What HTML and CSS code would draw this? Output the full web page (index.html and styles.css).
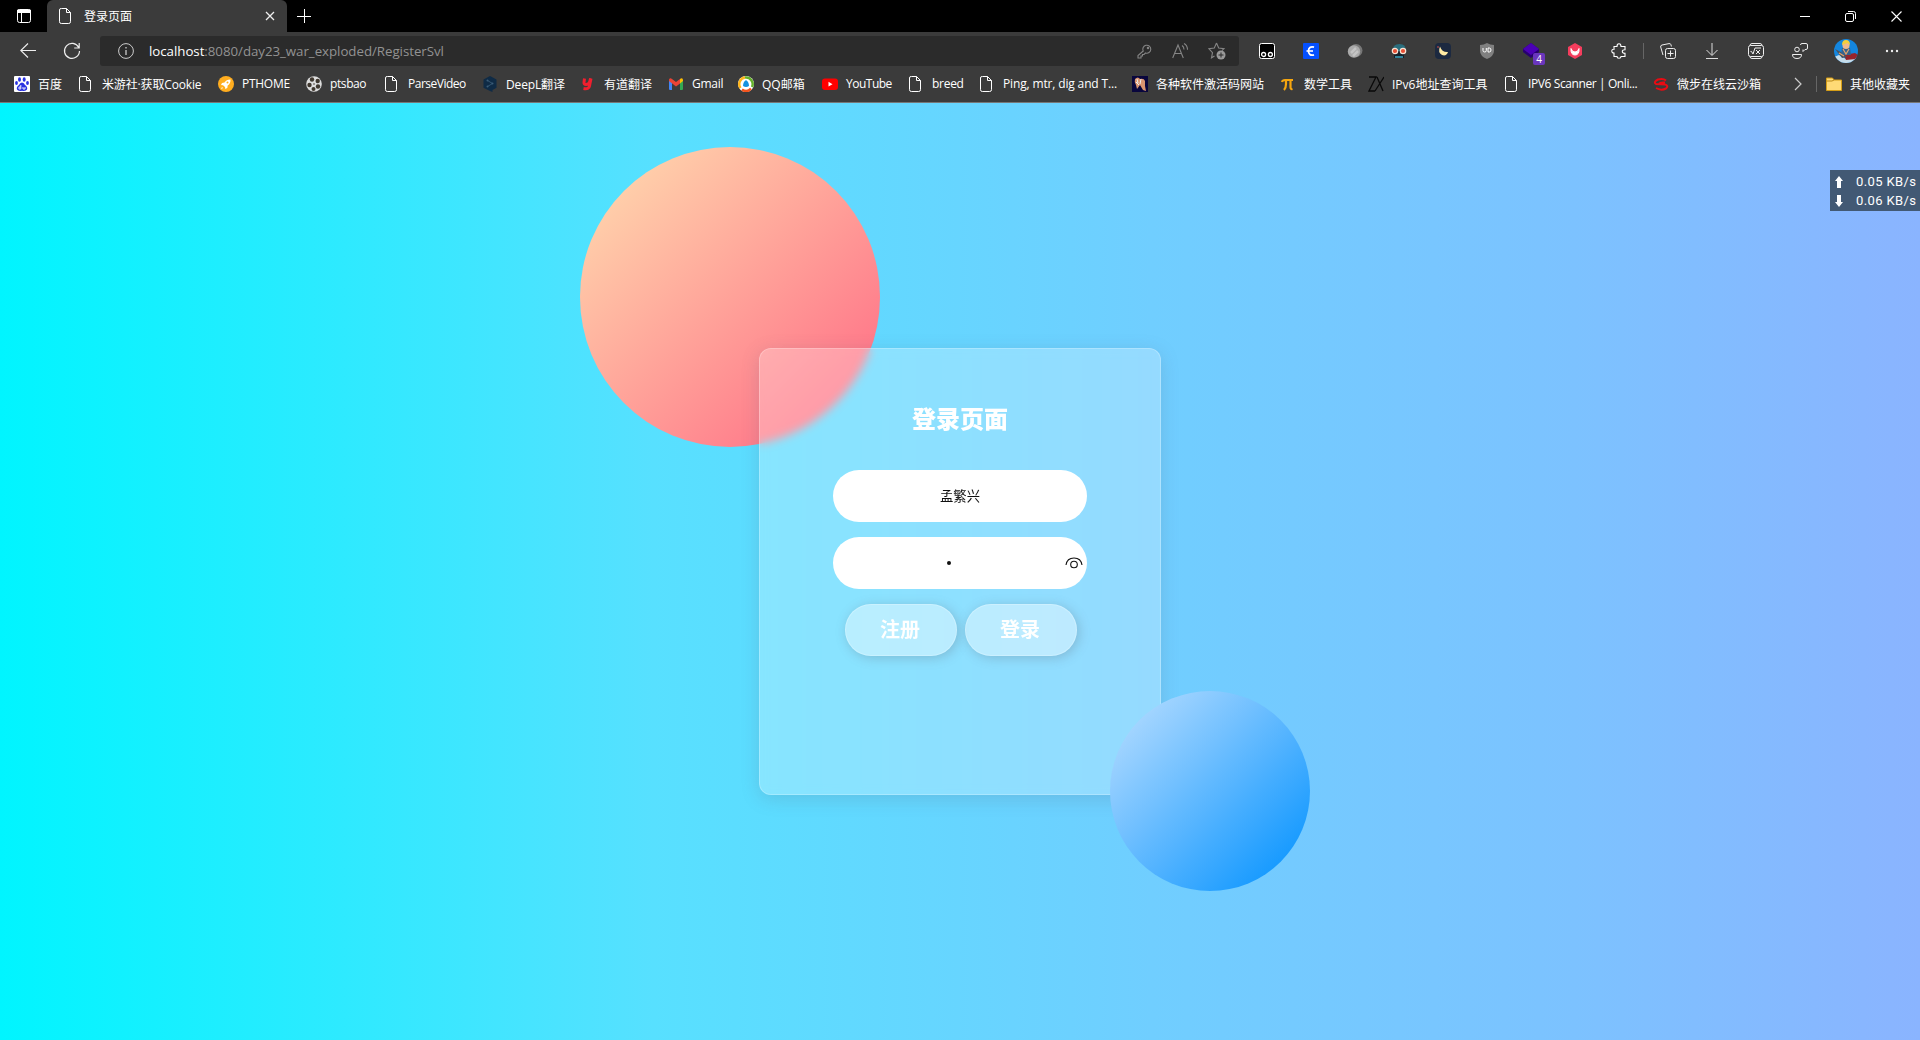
FILE: index.html
```html
<!DOCTYPE html>
<html lang="zh-CN">
<head>
<meta charset="utf-8">
<title>登录页面</title>
<link rel="stylesheet" href="styles.css">
</head>
<body>
<svg class="defs" width="0" height="0">
  <symbol id="file" viewBox="0 0 16 16"><path d="M3.500.5h5l4 4v9.200q0 1.800-1.800 1.800H3.300Q1.500 15.500 1.500 13.700V2Q1.500.5 3 .5zM8.500.5v4h4" fill="none" stroke="#fff"/></symbol>
</svg>

<header class="browser">
  <div class="tabs">
    <svg class="workspace" width="16" height="16" viewBox="0 0 16 16"><rect x="1.500" y="1.500" width="13" height="13" rx="2" fill="none" stroke="#fff"/><path d="M1.500 2h13v2.500h-13z" fill="#fff" stroke="#fff"/><path d="M5.500 4v10.500" stroke="#fff"/></svg>
    <div class="tab">
      <svg class="i16"><use href="#file"/></svg>
      <span>登录页面</span>
      <svg width="10" height="10" viewBox="0 0 10 10"><path d="M1 1l8 8M9 1L1 9" stroke="#eee" stroke-width="1.300"/></svg>
    </div>
    <svg class="plus" width="14" height="14" viewBox="0 0 14 14"><path d="M7.500 0v14M0 7.500h14" stroke="#fff"/></svg>
    <div class="window">
      <svg width="10" height="10" viewBox="0 0 10 10"><path d="M0 5.500h10" stroke="#fff"/></svg>
      <svg width="11" height="11" viewBox="0 0 11 11"><rect x=".5" y="2.500" width="8" height="8" rx="1.500" fill="none" stroke="#fff"/><path d="M3 .5h5.500q2 0 2 2V8" fill="none" stroke="#fff"/></svg>
      <svg width="11" height="11" viewBox="0 0 11 11"><path d="M.5.5l10 10M10.500.5l-10 10" stroke="#fff" stroke-width="1.100"/></svg>
    </div>
  </div>

  <div class="toolbar">
    <svg class="back" width="16" height="16" viewBox="0 0 16 16"><path d="M16 7.500H1M8 .5L.8 7.500 8 14.500" fill="none" stroke="#eee" stroke-width="1.100"/></svg>
    <svg class="reload" width="18" height="18" viewBox="0 0 18 18"><path d="M15.700 5.500A7.500 7.500 0 1 0 16.500 9M16.200 1v5h-5" fill="none" stroke="#eee" stroke-width="1.200"/></svg>
    <div class="address">
      <svg width="16" height="16" viewBox="0 0 16 16"><circle cx="8" cy="8" r="7.400" fill="none" stroke="#ccc"/><path d="M8 7v5M8 4v1.500" stroke="#ccc" stroke-width="1.300"/></svg>
      <p class="url"><b>localhost</b>:8080/day23_war_exploded/RegisterSvl</p>
      <div class="address-tools">
        <svg width="15" height="15" viewBox="0 0 15 15" fill="none" stroke="#858585" stroke-width="1.100"><path d="M6.200 7A4 4 0 1 1 8.500 9L7 10.500H5.500V12H4v2H1v-2.500z"/><circle cx="11" cy="4" r=".7"/></svg>
        <svg width="16" height="16" viewBox="0 0 16 16" fill="none" stroke="#858585" stroke-width="1.100"><path d="M.7 15L6 2l5.300 13M2.500 10.500h7M10 2.500q2 1.200 2 4M12 .5q3.500 2 3.500 6.200"/></svg>
        <svg width="18" height="18" viewBox="0 0 18 18"><path d="M8.500 1l2.200 5 5.300.6-2 2M6.500 14l-3 1.800L4.500 10.700.8 6.600 6.300 6 8.500 1" fill="none" stroke="#858585" stroke-width="1.100"/><circle cx="13" cy="13" r="4.500" fill="#9a9a9a"/><path d="M13 10.500v5M10.500 13h5" stroke="#2b2b2b"/></svg>
      </div>
    </div>
    <div class="extensions">
      <svg class="i16" viewBox="0 0 16 16"><rect x=".5" y=".5" width="15" height="15" rx="2" fill="#000" stroke="#fff"/><g fill="none" stroke="#fff" stroke-width="1.300"><circle cx="4.600" cy="11.500" r="2"/><circle cx="11.400" cy="11.500" r="2"/></g></svg>
      <svg class="i16" viewBox="0 0 16 16"><rect width="16" height="16" rx="1" fill="#0450ff"/><path d="M11 4.200C7.500 3 5.500 5 5.500 8s2 5 5.500 3.800" fill="none" stroke="#fff" stroke-width="1.800"/><path d="M3.500 8H10" stroke="#fff" stroke-width="1.600"/></svg>
      <svg class="i16" viewBox="0 0 16 16"><circle cx="9" cy="7.500" r="6.500" fill="#777"/><circle cx="7" cy="8.500" r="6.200" fill="#aaa"/><path d="M4 10l5-5M6 13l5-5" stroke="#c4c4c4" stroke-width="2.500"/></svg>
      <svg class="i16" viewBox="0 0 16 16"><path d="M1.500 8Q1.500 1 8.500 1t6 7z" fill="#2b6e7d"/><path d="M3 8h10v7H3z" fill="#15202a"/><path d="M4 13h8v2H4z" fill="#31839a"/><g fill="#e95035" stroke="#f6e4d5" stroke-width="1.200"><circle cx="4" cy="8" r="2.700"/><circle cx="12" cy="8" r="2.700"/></g></svg>
      <svg class="i16" viewBox="0 0 16 16"><rect width="16" height="16" rx="4" fill="#1c2940"/><path d="M5 3.500q2 6 8 5.500-1.500 4.500-6 3Q2.500 9.500 5 3.500" fill="#ffeaa3"/><circle cx="3" cy="4" r=".8" fill="#e5534b"/></svg>
      <svg class="i16" viewBox="0 0 16 16"><path d="M1 2q4 0 7-2 3 2 7 2v6q0 5-7 8-7-3-7-8z" fill="#808080"/><path d="M4 5v2.500q0 1.500 1.700 1.500T7.300 7.500V5M9 5v4h1.300Q12 9 12 7t-1.700-2z" fill="none" stroke="#fff"/></svg>
      <div class="blocks"><svg class="i16" viewBox="0 0 16 16"><path d="M0 6l8-6 8 6v3l-8 6-8-6z" fill="#27006f"/><path d="M0 6l8-6 8 6-8 6z" fill="#4b00b5"/></svg><i>4</i></div>
      <svg class="i16" viewBox="0 0 16 16"><path d="M8 0l7 4v8l-7 4-7-4V4z" fill="#f43d5d"/><path d="M4 5.500Q3.500 12 8 12t4-6.500Q11 9 8 9T4 5.500" fill="#fff" stroke="#fff"/></svg>
      <svg class="i16" viewBox="0 0 16 16"><path d="M3 3.500h3Q6 .7 8 .7t2 2.800h4v3.300q-2.700 0-2.700 1.800t2.700 1.800v3.100h-4Q10 15.300 8 15.300t-2-1.800H3V10Q.8 10 .8 8T3 6.300z" fill="none" stroke="#fff" stroke-width="1.100"/></svg>
    </div>
    <div class="actions">
      <svg class="i16" viewBox="0 0 16 16" fill="none" stroke="#eee"><rect x="5.500" y="5.500" width="10" height="10" rx="2"/><path d="M10.500 7.500v6M7.500 10.500h6M3 12L.7 4Q.3 2.500 2 2L9 .6q1.600-.3 2 1.200l.4 1.700"/></svg>
      <svg class="i16" viewBox="0 0 16 16" fill="none" stroke="#ddd"><path d="M8 0v12M2.500 7L8 12.500 13.500 7M2 15.500h12"/></svg>
      <svg class="i16" viewBox="0 0 16 16" fill="none" stroke="#eee"><path d="M2 2.500Q2 .5 4 .5h8q2 0 2 2M2 13.500q0 2 2 2h8q2 0 2-2"/><rect x=".5" y="2.500" width="15" height="11" rx="2"/><path d="M2.500 8.500h1L5 11l2-6h6M8 7l4 4M12 7l-4 4"/></svg>
      <svg class="i16" viewBox="0 0 16 16" fill="none" stroke="#eee"><circle cx="5" cy="6.500" r="2.300"/><path d="M.5 11.500h9q0 4-4.500 4t-4.500-4zM8.500 2q0-1.500 1.500-1.500h4q1.500 0 1.500 1.500v3q0 1.500-1.500 1.500h-1l-2 2v-2"/></svg>
    </div>
    <svg class="avatar" width="24" height="24" viewBox="0 0 24 24"><defs><clipPath id="round"><circle cx="12" cy="12" r="12"/></clipPath></defs><g clip-path="url(#round)"><path d="M0 0h24v24H0z" fill="#1386df"/><path d="M0 18l5-2 7 4 12-2v7H0z" fill="#c5dcea"/><path d="M10 16l11-2 3 2-2 4-10 1z" fill="#97242b"/><path d="M1 10l6 3 6 5-5 1z" fill="#495563"/><path d="M8 9h8l1 7H7z" fill="#35628d"/><path d="M9 10l3 5 3-5M5 14l5 3" stroke="#e3a36c" stroke-width="1.200" fill="none"/><circle cx="12" cy="6.500" r="3.500" fill="#efb98b"/><path d="M8 6q0-5 4-5t4 5l-2.500-2z" fill="#f2cf3c"/></g></svg>
    <svg class="more" width="14" height="4" viewBox="0 0 14 4" fill="#eee"><circle cx="2" cy="2" r="1.200"/><circle cx="7" cy="2" r="1.200"/><circle cx="12" cy="2" r="1.200"/></svg>
  </div>

  <nav class="bookmarks">
    <a style="width:64px"><svg class="i16" viewBox="0 0 16 16"><rect width="16" height="16" rx="1" fill="#fff"/><g fill="#2932e1"><ellipse cx="5.500" cy="3.500" rx="1.500" ry="2.200"/><ellipse cx="10.200" cy="3.500" rx="1.500" ry="2.200"/><ellipse cx="2.500" cy="7" rx="1.400" ry="2"/><ellipse cx="13.500" cy="7" rx="1.400" ry="2"/><path d="M8 6.500q2 0 3 2.500 3 2 2 4.500-1 2-5 1.300-4 .7-5-1.300-1-2.500 2-4.500 1-2.500 3-2.500"/></g><path d="M6.800 9v4H5v-2h1.800M9 11v2h2v-2" stroke="#fff" fill="none" stroke-width=".9"/></svg><span>百度</span></a>
    <a class="snug" style="width:140px"><svg class="i16"><use href="#file"/></svg><span>米游社·获取Cookie</span></a>
    <a style="width:88px"><svg class="i16" viewBox="0 0 16 16"><circle cx="8" cy="8" r="8" fill="#ffad1f"/><path d="M12.500 3.500q-4-.2-6 3l-2.500.5L3 9l2 .3L7 11l.3 2 2-1 .4-2.500q3-2 2.800-6M4 11l-1 2.200L5 12" fill="#fff"/><circle cx="9.500" cy="6.500" r="1" fill="#ffad1f"/></svg><span class="tight">PTHOME</span></a>
    <a style="width:78px"><svg class="i16" viewBox="0 0 16 16"><circle cx="8" cy="8" r="7.800" fill="#ddd"/><g fill="#40382f"><circle cx="6" cy="3.500" r="2.200"/><circle cx="11.700" cy="5" r="2.200"/><circle cx="3.500" cy="9" r="2.200"/><circle cx="7.500" cy="13" r="2"/><circle cx="12" cy="10.500" r="2.200"/><circle cx="8" cy="8" r=".8"/></g></svg><span class="tighter">ptsbao</span></a>
    <a style="width:98px"><svg class="i16"><use href="#file"/></svg><span class="tightest">ParseVideo</span></a>
    <a style="width:98px"><svg class="i16" viewBox="0 0 16 16"><path d="M8 0l6.500 3.500v8.300L10.500 14v2L8 15 1.500 11.800V3.500z" fill="#0f2b46"/><path d="M5.500 4.500l5 3-5 3" stroke="#345570" fill="none"/><g fill="#3b5d78"><circle cx="5.500" cy="4.500" r="1"/><circle cx="10.500" cy="7.500" r="1"/><circle cx="5.500" cy="10.500" r="1"/></g></svg><span class="snug">DeepL翻译</span></a>
    <a style="width:88px"><svg class="i16" viewBox="0 0 16 16"><path d="M4.500 2.500L4 6.500q-.2 2 2 2 3 0 3.700-2.500L10.500 2.500M11 2.500L9.500 10q-.5 3.500-6 2.500" fill="none" stroke="#f01f2e" stroke-width="3"/></svg><span>有道翻译</span></a>
    <a style="width:70px"><svg class="i16" viewBox="0 0 16 16"><path d="M1 4h3v10H2q-1 0-1-1z" fill="#4285f4"/><path d="M12 4h3v9q0 1-1 1h-2z" fill="#34a853"/><path d="M1 3.500Q2 1.500 4 3l4 3 4-3v4.500L8 10.500 1 5z" fill="#ea4335"/><path d="M12 3q2-1.500 3 .5V5l-3 2.500z" fill="#fbbc04"/></svg><span class="tight">Gmail</span></a>
    <a style="width:84px"><svg class="i16" viewBox="0 0 16 16"><circle cx="8" cy="8" r="8" fill="#fff"/><g fill="none" stroke-width="2.500"><path d="M2.500 12A6.700 6.700 0 0 1 7 1.500" stroke="#ffb51b"/><path d="M7 1.500A6.700 6.700 0 0 1 14 11" stroke="#65b12b"/><path d="M13 12.500q-4 4.500-9 1" stroke="#f3541d"/></g><path d="M8 4q3 2 3 6-3 2-6 0 0-4 3-6" fill="#1692df"/></svg><span>QQ邮箱</span></a>
    <a style="width:86px"><svg class="i16" viewBox="0 0 16 16"><rect y="2.500" width="16" height="11.500" rx="3" fill="#f00"/><path d="M6.500 5.800l4 2.400-4 2.400z" fill="#fff"/></svg><span class="tightest">YouTube</span></a>
    <a style="width:71px"><svg class="i16"><use href="#file"/></svg><span class="tight">breed</span></a>
    <a style="width:153px"><svg class="i16"><use href="#file"/></svg><span class="snug">Ping, mtr, dig and T...</span></a>
    <a style="width:148px"><svg class="i16" viewBox="0 0 16 16"><path d="M0 0h16v16H0z" fill="#09063d"/><path d="M3 3q3-3 5 0 4-1 5 2v5l1 5-3-1-3-5-3 4-1-4Q2 6 3 3" fill="#d9946f"/><path d="M5 3l1 4M9 3l-1 5M4 6l3 3" stroke="#eee"/></svg><span>各种软件激活码网站</span></a>
    <a style="width:88px"><svg class="i16" viewBox="0 0 16 16"><path d="M2 6q.5-2 3-2h8M6 4v4q0 4-2 6M10.500 4v7q0 2.500 2 2" stroke="#f5a610" stroke-width="2.200" fill="none"/></svg><span>数学工具</span></a>
    <a style="width:136px"><svg class="i16" viewBox="0 0 16 16"><path d="M1 1h7L1 15h6M9 1l6 14M16 1L7 15" fill="none" stroke="#090909" stroke-width="1.300"/></svg><span>IPv6地址查询工具</span></a>
    <a style="width:149px"><svg class="i16"><use href="#file"/></svg><span class="tighter">IPV6 Scanner | Onli...</span></a>
    <a class="last"><svg class="i16" viewBox="0 0 16 16"><path d="M13 4.500Q10 2 5 3.500 0 6 3 8l9 .5q4 1 1 4-5 2.500-10-.5M6 8q1-2 6-1.500" fill="none" stroke="#e90b13" stroke-width="2"/></svg><span>微步在线云沙箱</span></a>
    <svg class="chevron" width="8" height="14" viewBox="0 0 8 14"><path d="M1 1l6 6-6 6" fill="none" stroke="#ccc" stroke-width="1.200"/></svg>
    <a class="other"><svg class="i16" viewBox="0 0 16 16"><path d="M.5 2h6l1.500 2h7.500v10.500H.5z" fill="#ffda76" stroke="#d59d17"/><path d="M.5 5H6l2-1" stroke="#b98614" fill="none"/></svg><span>其他收藏夹</span></a>
  </nav>
</header>

<main class="page">
  <div class="circle coral"></div>
  <form class="card">
    <h1>登录页面</h1>
    <div class="field">孟繁兴</div>
    <div class="field password"><i class="dot"></i><svg width="18" height="12" viewBox="0 0 18 12" fill="none" stroke="#111" stroke-width="1.100"><path d="M1 8Q2 1 9 1t8 7"/><circle cx="9" cy="7.500" r="3.300"/></svg></div>
    <div class="buttons"><button type="button">注册</button><button type="button">登录</button></div>
  </form>
  <div class="circle blue"></div>
  <aside class="network">
    <p><svg width="8" height="12" viewBox="0 0 8 12"><path d="M4 0l4 5H6v7H2V5H0z" fill="#fff"/></svg><span>0.05 KB/s</span></p>
    <p><svg width="8" height="12" viewBox="0 0 8 12"><path d="M4 12l4-5H6V0H2v7H0z" fill="#fff"/></svg><span>0.06 KB/s</span></p>
  </aside>
</main>
</body>
</html>
```
FILE: styles.css
```css
* { box-sizing: border-box; }
body { margin: 0; height: 1040px; overflow: hidden; display: flex; flex-direction: column; font: 12px "Open Sans", "Noto Sans CJK SC", sans-serif; color: #fff; }
h1, p { margin: 0; }
i { font-style: normal; }
svg { display: block; flex: none; }
.defs { position: absolute; }
.i16 { width: 16px; height: 16px; }

.browser { height: 103px; background: #3b3b3b; border-bottom: 1px solid #777; flex: none; }
.tabs { height: 32px; background: #000; display: flex; align-items: center; }
.workspace { margin-left: 16px; }
.tab { width: 240px; height: 32px; margin-left: 15px; padding: 0 12px 0 11px; background: #3b3b3b; border-radius: 6px 6px 0 0; display: flex; align-items: center; }
.tab span { margin: -1px 0 0 10px; flex: 1; }
.plus { margin-left: 10px; }
.window { margin-left: auto; margin-right: 18px; display: flex; align-items: center; gap: 35px; }

.toolbar { height: 38px; display: flex; align-items: center; }
.back { margin-left: 20px; }
.reload { margin-left: 27px; }
.address { margin-left: 19px; width: 1139px; height: 30px; padding: 0 13px 0 18px; border-radius: 3px; background: #2b2b2b; display: flex; align-items: center; }
.url { margin-left: 15px; font-size: 13.300px; letter-spacing: -.04px; color: #929292; }
.url b { color: #fff; font-weight: 400; }
.address-tools { margin-left: auto; display: flex; gap: 20px; align-items: center; }
.extensions { margin-left: 20px; display: flex; gap: 28px; }
.blocks { position: relative; }
.blocks i { position: absolute; left: 10px; top: 10px; width: 12px; height: 12px; border-radius: 2px; background: #6a36bd; font-size: 10px; line-height: 12px; text-align: center; }
.actions { margin-left: 16px; padding-left: 16px; height: 16px; border-left: 1px solid #666; display: flex; gap: 28px; }
.avatar { margin-left: 26px; }
.more { margin-left: 27px; }

.bookmarks { height: 28px; padding-left: 14px; display: flex; align-items: center; white-space: nowrap; }
.bookmarks a { display: flex; align-items: center; gap: 8px; flex: none; }
.bookmarks span { margin-top: -1px; }
.snug { letter-spacing: -.15px; }
.tight { letter-spacing: -.28px; }
.tighter { letter-spacing: -.4px; }
.tightest { letter-spacing: -.5px; }
.chevron { margin-left: auto; }
.bookmarks .other { margin-left: 14px; margin-right: 10px; height: 16px; border-left: 1px solid #666; padding-left: 9px; }

.page { position: relative; flex: 1; overflow: hidden; display: flex; justify-content: center; align-items: flex-start; background: linear-gradient(90deg, #00f5ff 0%, #57e0ff 34%, #70ceff 60%, #7cc2ff 82%, #88b6ff 97%, #8ab4ff 100%); }
.circle { position: absolute; border-radius: 50%; }
.coral { left: 580px; top: 44px; width: 300px; height: 300px; background: linear-gradient(135deg, #ffdfb0, #ff6f86 92%); }
.blue { left: 1110px; top: 588px; width: 200px; height: 200px; background: linear-gradient(135deg, #bee0ff, #0894ff 94%); }
.card { position: relative; width: 402px; height: 447px; margin-top: 245px; padding-top: 51px; border: 1px solid rgba(255,255,255,.24); border-radius: 12px; background: rgba(255,255,255,.26); backdrop-filter: blur(5px); box-shadow: 0 4px 18px rgba(90,110,130,.22); display: flex; flex-direction: column; align-items: center; }
h1 { font: 900 24px/36px "Noto Sans CJK SC", sans-serif; margin-bottom: 34px; }
.field { width: 254px; height: 52px; margin-bottom: 15px; padding-bottom: 2px; border-radius: 26px; background: #fff; color: #111; font: 13.333px "Noto Sans CJK SC", sans-serif; display: flex; align-items: center; justify-content: center; }
.password { padding: 0 4px 0 0; }
.dot { width: 4px; height: 4px; margin-left: auto; border-radius: 50%; background: #111; }
.password svg { margin-left: 114px; }
.buttons { display: flex; gap: 8px; margin-left: 2px; }
button { width: 112px; height: 52px; border: 1px solid rgba(255,255,255,.24); border-radius: 26px; color: #fff; background: rgba(255,255,255,.4); box-shadow: 2px 2px 12px rgba(95,110,125,.32); font: 700 20px "Noto Sans CJK SC", sans-serif; padding: 0 2px 3px 0; }
.network { position: absolute; right: 0; top: 67px; width: 90px; height: 41px; padding: 2px 0 0 5px; background: #425974; font: 13px/19px Roboto, sans-serif; letter-spacing: .37px; }
.network p { display: flex; align-items: center; gap: 13px; white-space: nowrap; }
```
